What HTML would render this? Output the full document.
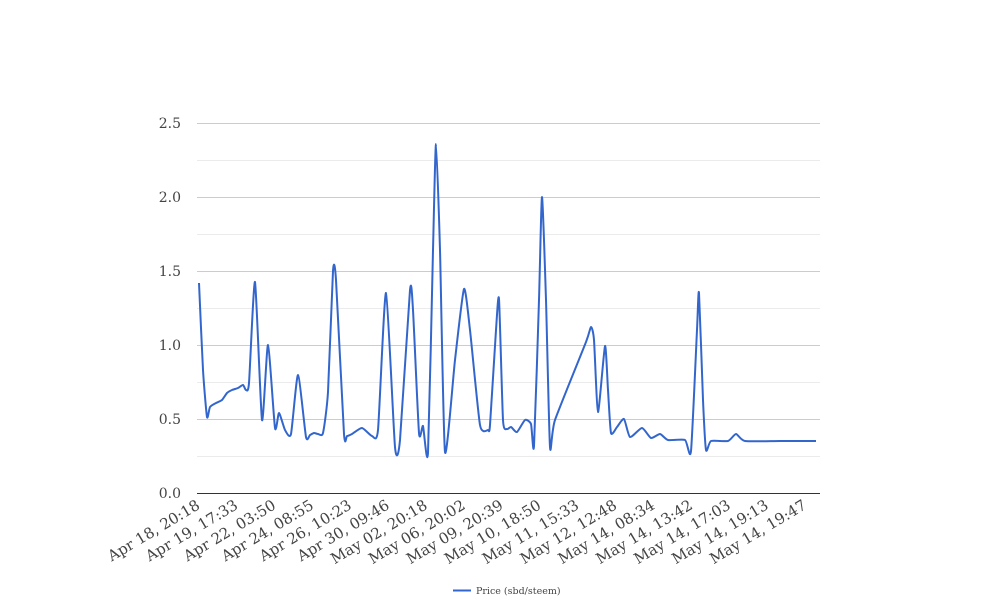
<!DOCTYPE html>
<html><head><meta charset="utf-8"><style>
html,body{margin:0;padding:0;background:#fff;width:1008px;height:616px;overflow:hidden}
svg text{font-family:"DejaVu Serif","Liberation Serif",serif;fill:#444}
</style></head><body>
<svg width="1008" height="616" xmlns="http://www.w3.org/2000/svg">
<g stroke="#ebebeb" stroke-width="1">
<line x1="197" x2="820" y1="160.5" y2="160.5"/><line x1="197" x2="820" y1="234.5" y2="234.5"/><line x1="197" x2="820" y1="308.5" y2="308.5"/><line x1="197" x2="820" y1="382.5" y2="382.5"/><line x1="197" x2="820" y1="456.5" y2="456.5"/>
</g>
<g stroke="#cccccc" stroke-width="1">
<line x1="197" x2="820" y1="123.5" y2="123.5"/><line x1="197" x2="820" y1="197.5" y2="197.5"/><line x1="197" x2="820" y1="271.5" y2="271.5"/><line x1="197" x2="820" y1="345.5" y2="345.5"/><line x1="197" x2="820" y1="419.5" y2="419.5"/>
</g>
<line x1="197" x2="820" y1="493.5" y2="493.5" stroke="#333" stroke-width="1"/>
<g font-size="14" text-anchor="end">
<text x="181" y="128">2.5</text><text x="181" y="202">2.0</text><text x="181" y="276">1.5</text><text x="181" y="350">1.0</text><text x="181" y="424">0.5</text><text x="181" y="498">0.0</text>
</g>
<g font-size="15" text-anchor="end" id="xl"></g>
<path id="ln" fill="none" stroke="#3366cc" stroke-width="2" stroke-linejoin="round"/>
<line x1="453" x2="471" y1="590.5" y2="590.5" stroke="#3366cc" stroke-width="2"/>
<text x="476" y="594" font-size="9.5" fill="#222">Price (sbd/steem)</text>
</svg>
<script>
var p=[[199,283],[203,370],[207,417],[210,407],[216,403],[222,400],[227,393],[232,390],[238,388],[243,385],[246,390],[249,383],[255,282],[262,420],[268,345],[275,428],[279,413],[285,430],[291,434],[298,375],[306,437],[310,435],[314,433],[318,434],[323,433],[328,392],[333,271],[336,280],[344,434],[347,436],[352,434],[362,428],[372,436],[378,430],[386,293],[395,447],[400,440],[410,290],[413,310],[419,433],[423,426],[428,453],[433,250],[436,144],[440,250],[445,452],[455,360],[464,289],[470,330],[480,425],[488,430],[490,425],[496,330],[499,299],[503,420],[507,429],[511,427],[517,432],[525,420],[531,424],[534,446],[539,300],[542,197],[546,300],[550,447],[555,420],[586,342],[591,327],[594,340],[598,412],[605,346],[608,390],[611,433],[617,427],[624,419],[630,437],[642,428],[651,438],[660,434],[668,440],[685,440],[691,451],[697,330],[699,293],[703,400],[706,450],[711,441],[728,441],[736,434],[745,441],[780,441],[816,441]];
var d="M"+p[0];
for(var i=0;i<p.length-1;i++){var a=p[Math.max(0,i-1)],b=p[i],c=p[i+1],e=p[Math.min(p.length-1,i+2)];
var t=0.1;d+=" C"+(b[0]+(c[0]-a[0])*t)+","+(b[1]+(c[1]-a[1])*t)+" "+(c[0]-(e[0]-b[0])*t)+","+(c[1]-(e[1]-b[1])*t)+" "+c[0]+","+c[1];}
document.getElementById("ln").setAttribute("d",d);
var L=["Apr 18, 20:18","Apr 19, 17:33","Apr 22, 03:50","Apr 24, 08:55","Apr 26, 10:23","Apr 30, 09:46","May 02, 20:18","May 06, 20:02","May 09, 20:39","May 10, 18:50","May 11, 15:33","May 12, 12:48","May 14, 08:34","May 14, 13:42","May 14, 17:03","May 14, 19:13","May 14, 19:47"];
var g=document.getElementById("xl"),h="";
for(var k=0;k<L.length;k++){var x=201+37.9*k,y=508;h+='<text transform="translate('+x+','+y+') rotate(-31)">'+L[k]+'</text>';}
g.innerHTML=h;
</script>
</body></html>
